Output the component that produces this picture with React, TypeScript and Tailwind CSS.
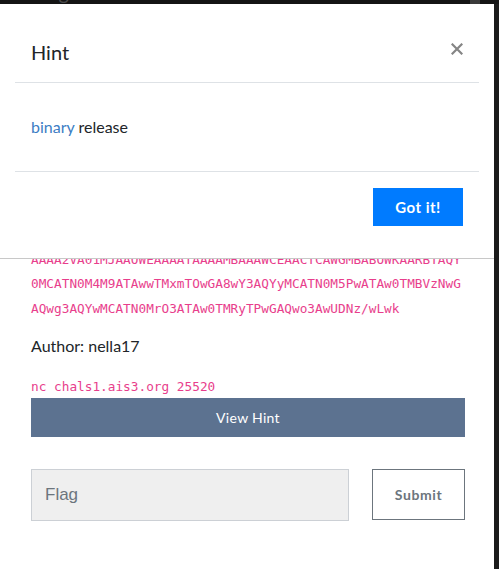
import React from "react";

const mono = { fontFamily: '"DejaVu Sans Mono", "Liberation Mono", monospace' };

export default function App() {
  return (
    <div
      className="relative flex h-[569px] w-[499px] overflow-hidden bg-white"
      style={{ fontFamily: 'Lato, "Noto Sans", sans-serif' }}
    >
      <div className="relative w-[494px] shrink-0">
        {/* top navbar remnant */}
        <div className="flex h-[4px] items-end overflow-hidden bg-[#141414]">
          <div className="ml-[-7px] mt-[-18px] text-[20px] leading-[24px] text-[#4a4a4a]">Challenges</div>
          <div className="ml-auto mr-[14px] h-[4px] w-[10px] bg-[#3a3a3a]" />
        </div>

        {/* page content behind modal */}
        <div className="pl-[31px] pr-[29px]">
          <div className="mt-[170px] text-[12.75px] leading-[24.5px] text-[#e83e8c]" style={mono}>
            <div>AQwg3AQYwMCATN0MrO3ATAw0TMRyTPwGAQwo3AwUDNz/wLwk</div>
            <div>0MCATN0M4M9ATAwwTMxmTOwGA8wY3AQYyMCATN0M5PwATAw0</div>
            <div>TMBVzNwGAQwg3AQYwMCATN0MrO3ATAw0TMRyTPwGAQwo3AwU</div>
            <div>AAAA2VA01MJAAOWEAAAATAAAAMBAAAWCEAACTCAWGMBABOWKAARBTAQY</div>
            <div>0MCATN0M4M9ATAwwTMxmTOwGA8wY3AQYyMCATN0M5PwATAw0TMBVzNwG</div>
            <div>AQwg3AQYwMCATN0MrO3ATAw0TMRyTPwGAQwo3AwUDNz/wLwk</div>
          </div>
          <div className="mt-[13px] text-[16px] leading-[24px] text-[#212529]">Author: nella17</div>
          <div className="mt-[19px] text-[12.75px] leading-[20px] text-[#e83e8c]" style={mono}>
            nc chals1.ais3.org 25520
          </div>
          <button className="mt-[1px] flex h-[39px] w-[434px] items-center justify-center bg-[#5c7290] text-[14px] tracking-[0.3px] text-white">
            View Hint
          </button>
          <div className="mt-[32px] flex items-start">
            <div
              className="flex h-[52px] w-[318px] items-center border border-[#ccd0d5] bg-[#efefef] pl-[13px] text-[17px] text-[#6c757d]"
              style={{ fontFamily: '"Liberation Sans", Arial, sans-serif' }}
            >
              Flag
            </div>
            <button className="ml-[23px] flex h-[51px] w-[93px] items-center justify-center border border-[#6c757d] text-[14px] font-bold tracking-[0.6px] text-[#6c757d]">
              Submit
            </button>
          </div>
        </div>

        {/* modal */}
        <div className="absolute left-0 top-[4px] h-[255px] w-[494px] border-b border-[#c8c8c8] bg-white">
          <div className="mx-[15px]">
            <div className="flex items-start justify-between border-b border-[#dee2e6] px-[16px] pb-[15px] pt-[33px]">
              <div className="text-[20px] leading-[30px] text-[#212529]">Hint</div>
              <svg width="12" height="12" viewBox="0 0 12 12" className="mt-[6px]">
                <path d="M1.5 1.5 L10.5 10.5 M10.5 1.5 L1.5 10.5" stroke="#858585" strokeWidth="2.2" strokeLinecap="square" />
              </svg>
            </div>
            <div className="border-b border-[#dee2e6] px-[16px] py-[32px] text-[16px] leading-[24px] text-[#212529]">
              <span className="text-[#3c7dc4]">binary</span> release
            </div>
            <div className="flex justify-end px-[16px] pt-[16px]">
              <button className="flex h-[38px] w-[90px] items-center justify-center bg-[#007bff] text-[15px] font-bold tracking-[0.5px] text-white">
                Got it!
              </button>
            </div>
          </div>
        </div>
      </div>
      {/* right dark strip */}
      <div className="flex w-[5px] shrink-0 flex-col">
        <div className="h-[4px] bg-[#141414]" />
        <div className="flex-1 bg-[#1b1b1b]" />
      </div>
    </div>
  );
}
